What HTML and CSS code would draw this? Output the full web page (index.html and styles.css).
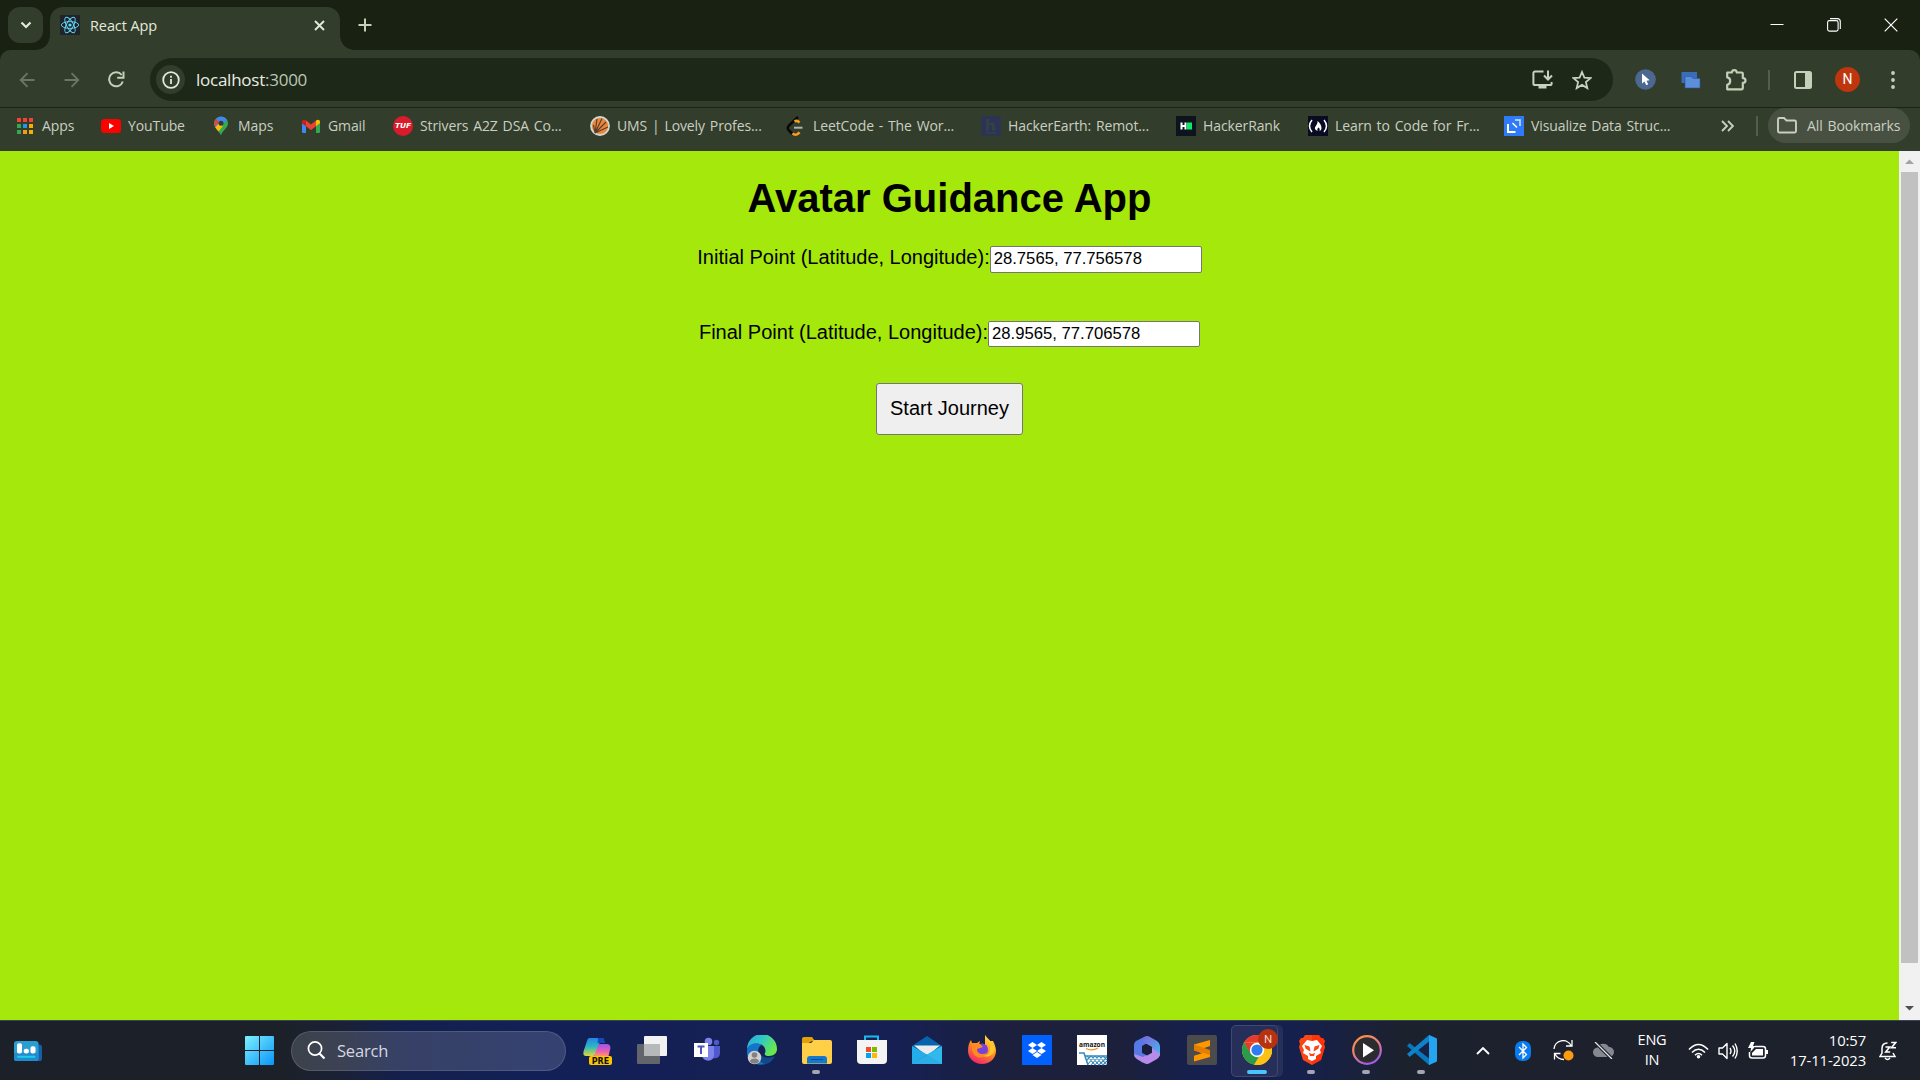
FILE: index.html
```html
<!DOCTYPE html>
<html lang="en">
<head>
<meta charset="utf-8">
<title>React App</title>
<link rel="stylesheet" href="styles.css">
</head>
<body>
<div class="desktop">
  <header class="tabstrip">
    <button class="tab-search" aria-label="Search tabs"><svg width="12" height="8" viewBox="0 0 12 8"><path d="M1.5 1.5 6 6l4.500-4.500" fill="none" stroke="#e3e9dc" stroke-width="2.200"/></svg></button>
    <div class="tab">
      <svg width="20" height="20" viewBox="0 0 20 20"><rect width="20" height="20" rx="1" fill="#20232a"/><g fill="none" stroke="#61dafb" stroke-width=".9"><ellipse cx="10" cy="10" rx="8.700" ry="3.400"/><ellipse cx="10" cy="10" rx="8.700" ry="3.400" transform="rotate(60 10 10)"/><ellipse cx="10" cy="10" rx="8.700" ry="3.400" transform="rotate(120 10 10)"/></g><circle cx="10" cy="10" r="1.600" fill="#61dafb"/></svg>
      <span class="tab-title">React App</span>
      <svg width="11" height="11" viewBox="0 0 11 11"><path d="M1 1l9 9M10 1l-9 9" stroke="#e3e9dc" stroke-width="1.900"/></svg>
    </div>
    <svg class="new-tab" width="14" height="14" viewBox="0 0 14 14"><path d="M7 .5v13M.5 7h13" stroke="#c5d0b8" stroke-width="2"/></svg>
    <div class="window-controls">
      <svg width="14" height="14" viewBox="0 0 14 14"><path d="M.5 6.500h13" stroke="#fff"/></svg>
      <svg width="14" height="14" viewBox="0 0 14 14"><rect x=".6" y="2.600" width="10.500" height="10.500" rx="1.800" fill="none" stroke="#fff" stroke-width="1.100"/><path d="M3 .6h7.300a3 3 0 0 1 3 3V11" fill="none" stroke="#fff" stroke-width="1.100"/></svg>
      <svg width="14" height="14" viewBox="0 0 14 14"><path d="M.7.7l12.600 12.600M13.300.7.7 13.300" stroke="#fff" stroke-width="1.200"/></svg>
    </div>
  </header>

  <nav class="toolbar">
    <span class="slot"><svg width="16" height="16" viewBox="0 0 16 16"><path d="M15.500 8H2M8.500 1.200 1.700 8l6.800 6.800" fill="none" stroke="#6d7566" stroke-width="1.800"/></svg></span>
    <span class="slot"><svg width="16" height="16" viewBox="0 0 16 16"><path d="M.5 8H14M7.500 1.200 14.300 8l-6.800 6.800" fill="none" stroke="#6d7566" stroke-width="1.800"/></svg></span>
    <span class="slot"><svg width="17" height="17" viewBox="0 0 17 17"><path d="M14.800 10.500A7 7 0 1 1 13.700 4" fill="none" stroke="#c5d0b8" stroke-width="2"/><path d="M15.500.5v6.300H9.200" fill="none" stroke="#c5d0b8" stroke-width="2"/></svg></span>
    <div class="omnibox">
      <span class="site-info"><svg width="18" height="18" viewBox="0 0 18 18"><circle cx="9" cy="9" r="7.800" fill="none" stroke="#e3e9dc" stroke-width="1.800"/><path d="M9 8v5M9 4.800v2" stroke="#e3e9dc" stroke-width="1.800"/></svg></span>
      <span class="url">localhost<i>:3000</i></span>
      <svg width="21" height="19" viewBox="0 0 21 19"><path d="M11.500 1.400H3a1.600 1.600 0 0 0-1.600 1.600v10.500A1.600 1.600 0 0 0 3 15.100h15a1.600 1.600 0 0 0 1.600-1.600V12" fill="none" stroke="#c9cfc3" stroke-width="2"/><path d="M6.500 15h8v3.500h-8z" fill="#c9cfc3"/><path d="M16 .5v8M12 5.500l4 4 4-4" fill="none" stroke="#c9cfc3" stroke-width="2"/></svg>
      <svg width="20" height="20" viewBox="0 0 20 20"><path d="m10 2 2.400 5.600 6.100.5-4.600 4 1.400 6L10 14.900l-5.300 3.200 1.400-6-4.600-4 6.100-.5z" fill="none" stroke="#c9cfc3" stroke-width="1.800"/></svg>
    </div>
    <span class="slot"><svg width="21" height="21" viewBox="0 0 21 21"><circle cx="10.500" cy="10.500" r="10.300" fill="#4d6890"/><path d="M7 4.500v10l2.500-2 1.700 3.700 2-1-1.700-3.500 3.200-.4z" fill="#fff"/></svg></span>
    <span class="slot"><svg width="20" height="18" viewBox="0 0 20 18"><path d="M.5 1h15.500v11H.5z" fill="#3b6cba"/><path d="M4 5.500h6l2 2h7V17H4z" fill="#5b8fdc" stroke="#2c559c" stroke-width=".6"/></svg></span>
    <span class="slot"><svg width="22" height="22" viewBox="0 0 22 22"><path d="M2.200 3.500h4.600c.2-1.600 1-2.400 2.500-2.400s2.300.8 2.500 2.400h4.800a1.200 1.200 0 0 1 1.200 1.200v4.400c1.800.1 2.700.9 2.700 2.400s-.9 2.300-2.700 2.400v5.200a1.200 1.200 0 0 1-1.200 1.200H2.200v-4.500c1.800-.3 3-1.600 3-3.700s-1.200-3.500-3-3.700z" fill="none" stroke="#c5d0b8" stroke-width="2.200" stroke-linejoin="round"/></svg></span>
    <span class="divider"></span>
    <span class="slot"><svg width="18" height="18" viewBox="0 0 18 18"><rect x="1" y="1" width="16" height="16" rx="1.500" fill="none" stroke="#c5d0b8" stroke-width="2"/><path d="M11 1h6v16h-6z" fill="#c5d0b8"/></svg></span>
    <span class="slot"><span class="profile">N</span></span>
    <span class="slot"><svg width="4" height="18" viewBox="0 0 4 18" fill="#c5d0b8"><circle cx="2" cy="2" r="1.900"/><circle cx="2" cy="9" r="1.900"/><circle cx="2" cy="16" r="1.900"/></svg></span>
  </nav>

  <nav class="bookmarks">
    <a class="bookmark apps"><svg width="18" height="18" viewBox="0 0 18 18"><path fill="#f44336" d="M1 1h4v4H1zM7 1h4v4H7zM13 1h4v4h-4z"/><path fill="#34a853" d="M1 7h4v4H1zM1 13h4v4H1z"/><path fill="#2196f3" d="M7 7h4v4H7z"/><path fill="#fbab05" d="M13 7h4v4h-4zM13 13h4v4h-4z"/><path fill="#f39c12" d="M7 13h4v4H7z"/></svg><span>Apps</span></a>
    <a class="bookmark"><svg width="20" height="20" viewBox="0 0 20 20"><rect y="3" width="20" height="14" rx="3.500" fill="#f00"/><path d="M8 7v6l5-3z" fill="#fff"/></svg><span>YouTube</span></a>
    <a class="bookmark"><svg width="20" height="20" viewBox="0 0 20 20"><path d="M10 .5a6.900 6.900 0 0 1 7 7C17 12 11.500 14 10 19.500 9 16 3 12 3 7.500a7 7 0 0 1 7-7z" fill="#34a853"/><path d="M3 7.500 5 3l3 3-3.500 6C3.500 10.500 3 9 3 7.500z" fill="#ea4335"/><path d="M5 3a7 7 0 0 1 11 1L8 11.500 4.500 12z" fill="#4285f4"/><path d="M4.300 11.500 8 7l4 3-4.500 5.500z" fill="#fbbc04"/><path d="m3.700 4.800 1.300-1.800L8 6l-2.500 3z" fill="#ea4335"/><circle cx="10" cy="7.300" r="2.500" fill="#333d2b"/></svg><span>Maps</span></a>
    <a class="bookmark"><svg width="20" height="20" viewBox="0 0 20 20"><path d="M1 7l4 3v7H2a1 1 0 0 1-1-1z" fill="#4285f4"/><path d="M19 7l-4 3v7h3a1 1 0 0 0 1-1z" fill="#34a853"/><path d="M5 4.500l5 4 5-4v5.800l-5 3.700-5-3.700z" fill="#ea4335"/><path d="M15 4.500c2-1.700 4-.7 4 1.300v1.500l-4 3z" fill="#fbbc04"/><path d="M1 7.300V5.800c0-2 2-3 4-1.300v5.800z" fill="#c5221f"/></svg><span>Gmail</span></a>
    <a class="bookmark"><svg width="20" height="20" viewBox="0 0 20 20"><circle cx="10" cy="10" r="10" fill="#d91c2c"/><text x="10" y="12.400" text-anchor="middle" textLength="16" lengthAdjust="spacingAndGlyphs" class="tuf">TUF</text></svg><span>Strivers A2Z DSA Co...</span></a>
    <a class="bookmark"><svg width="20" height="20" viewBox="0 0 20 20"><circle cx="10" cy="10" r="9" fill="#e9863b" stroke="#d5d5cf" stroke-width="1.800"/><path d="M5 17 3.500 9M5 17 7 3M5 17 12 2.500M5 17l11-11M5 17l13-6" stroke="#5b3e29" stroke-width="1.200"/></svg><span>UMS | Lovely Profes...</span></a>
    <a class="bookmark"><svg width="20" height="20" viewBox="0 0 20 20" fill="none" stroke-width="2.500"><path d="M12 1 3 9.500c-1.700 1.700-1.700 3.300 0 5L6.500 18" stroke="#090909"/><path d="M8.500 5.500c2-1.300 3.200-.9 5 1.100M6.500 17.300c2.500 2.300 5 1.600 7-1" stroke="#f89f1b"/><path d="M8 11.700h8.500" stroke="#b3b3b3" stroke-width="2"/></svg><span>LeetCode - The Wor...</span></a>
    <a class="bookmark"><svg width="20" height="20" viewBox="0 0 20 20"><rect width="20" height="20" rx="1.500" fill="#2c3454"/><path d="M5 3h3v4c4-1.500 6-.2 6 3v4.500h-3V11c0-2-1.300-2.200-3-1v4.500H5zM5 16h10v1.500H5z" fill="#344045"/></svg><span>HackerEarth: Remot...</span></a>
    <a class="bookmark"><svg width="20" height="20" viewBox="0 0 20 20"><path d="M0 0h20v20H0z" fill="#0e141e"/><path d="M4.500 6.500h2v2.500h2V6.500h2v7h-2V11h-2v2.500h-2z" fill="#fff"/><path d="M11 6.500h5v7h-5z" fill="#05ed62"/></svg><span>HackerRank</span></a>
    <a class="bookmark"><svg width="20" height="20" viewBox="0 0 20 20"><path d="M0 0h20v20H0z" fill="#0a0a23"/><path d="M4 4Q-1 10 4 16M16 4q5 6 0 12" fill="none" stroke="#fff" stroke-width="1.500"/><path d="M9.500 5c2.500 2 4 4.500 4 7 0 1.500-.7 2.500-2 3 .6-1.800.1-2.700-1-3.500-1.100.9-1.500 2-.9 3.400C7.500 14.300 6.500 13 7 11.500 7.700 9.500 9.800 8.500 9.500 5z" fill="#fff"/></svg><span>Learn to Code for Fr...</span></a>
    <a class="bookmark"><svg width="20" height="20" viewBox="0 0 20 20"><path d="M0 0h20v20H0z" fill="#2f7bf7"/><path d="M4 8v8h7.500" fill="none" stroke="#fff" stroke-width="2"/><path d="m8.500 7 4.500 4.500" stroke="#fff" stroke-width="1.500"/><path d="M11 4h5v6" fill="none" stroke="#d3e5ff" stroke-width="1.500"/></svg><span>Visualize Data Struc...</span></a>
    <svg class="overflow" width="13" height="12" viewBox="0 0 13 12"><path d="m1 1 5 5-5 5M7 1l5 5-5 5" fill="none" stroke="#c9cfc3" stroke-width="1.900"/></svg>
    <span class="bm-divider"></span>
    <a class="all-bookmarks"><svg width="20" height="17" viewBox="0 0 20 17"><path d="M1 2.500A1.500 1.500 0 0 1 2.500 1H7l2.500 2.500h8A1.500 1.500 0 0 1 19 5v9a1.500 1.500 0 0 1-1.500 1.500h-15A1.500 1.500 0 0 1 1 14z" fill="none" stroke="#c9cfc3" stroke-width="1.900"/></svg><span>All Bookmarks</span></a>
  </nav>

  <div class="viewport">
    <main class="page">
      <h1>Avatar Guidance App</h1>
      <label class="field">Initial Point (Latitude, Longitude):<input type="text" value="28.7565, 77.756578"></label>
      <label class="field">Final Point (Latitude, Longitude):<input type="text" value="28.9565, 77.706578"></label>
      <button class="start">Start Journey</button>
    </main>
    <aside class="scrollbar">
      <svg width="21" height="21" viewBox="0 0 21 21"><path d="M6 13h9l-4.500-4.500z" fill="#a3a3a3"/></svg>
      <div class="thumb"></div>
      <svg class="down" width="21" height="21" viewBox="0 0 21 21"><path d="M6 7h9l-4.500 4.500z" fill="#505050"/></svg>
    </aside>
  </div>

  <footer class="taskbar">
    <svg class="widgets" width="28" height="20" viewBox="0 0 28 23" preserveAspectRatio="none"><rect x="10" y="4" width="18" height="19" rx="3" fill="#155fa8"/><rect width="24.500" height="23" rx="3" fill="#2b9dd0"/><path d="M0 14h24.500v6a3 3 0 0 1-3 3H3a3 3 0 0 1-3-3z" fill="#2589cc"/><g fill="#fff"><rect x="3" y="2.500" width="5" height="12" rx="2"/><rect x="9.800" y="9" width="5" height="5.500" rx="2"/><rect x="16.500" y="6" width="5" height="8.500" rx="2"/></g><rect x="3" y="17" width="18.500" height="2.200" rx="1" fill="#13d2ef"/></svg>
    <svg class="start-logo" width="29" height="29" viewBox="0 0 29 29"><defs><linearGradient id="win" gradientUnits="userSpaceOnUse" x1="0" y1="0" x2="29" y2="29"><stop stop-color="#7cf1ff"/><stop offset="1" stop-color="#0a95f8"/></linearGradient></defs><path d="M0 1a1 1 0 0 1 1-1h13v14H0zM15 0h13a1 1 0 0 1 1 1v13H15zM0 15h14v14H1a1 1 0 0 1-1-1zM15 15h14v13a1 1 0 0 1-1 1H15z" fill="url(#win)"/></svg>
    <div class="search"><svg width="19" height="19" viewBox="0 0 19 19"><circle cx="8" cy="7.500" r="6.600" fill="none" stroke="#fff" stroke-width="1.700"/><path d="m12.500 12.500 5 5" stroke="#fff" stroke-width="2.200"/></svg><span>Search</span></div>
    <div class="pinned">
      <span class="app"><svg width="30" height="30" viewBox="0 0 30 30"><defs><linearGradient id="c1" x2="0" y2="1"><stop stop-color="#2384ea"/><stop offset=".5" stop-color="#2fb9bd"/><stop offset="1" stop-color="#e0d83d"/></linearGradient><linearGradient id="c2" x2="0" y2="1"><stop stop-color="#9a57ed"/><stop offset=".6" stop-color="#e95db5"/><stop offset="1" stop-color="#ff975b"/></linearGradient></defs><path d="M8 3h12c2 0 2 2 2.600 5h-5l-4 11c-1 2-2 2-4 2H4c-3 0-3-3-2-6l3-9c.6-2 1-3 3-3z" fill="url(#c1)"/><path d="M16 3h4c2 0 2 2 2.600 5h-7z" fill="#1549bc"/><path d="M19 9h6c3 0 4 3 3 6l-1.500 6H12l4-10c.6-1.500 1-2 3-2z" fill="url(#c2)"/><rect x="7" y="21" width="23" height="9" rx="2" fill="#ffc400"/><text x="18.500" y="28.500" text-anchor="middle" class="pre">PRE</text></svg></span>
      <span class="app"><svg width="30" height="30" viewBox="0 0 30 30"><rect y="9" width="23" height="20" rx="1" fill="#62656a"/><rect x="7" y="1" width="23" height="20" rx="1" fill="#f2f2f2"/><path d="M7 9h16v12H7z" fill="#b7b8ba"/></svg></span>
      <span class="app"><svg width="30" height="30" viewBox="0 0 30 30"><circle cx="16.500" cy="6.500" r="3.800" fill="#7b83eb"/><circle cx="24.500" cy="7.500" r="2.700" fill="#5059c9"/><path d="M18 11h10v7c0 7-10 7-10 0z" fill="#5059c9"/><path d="M10 11h12v9c0 8-12 7-12 0z" fill="#7b83eb"/><rect x="2" y="8" width="14" height="14" fill="#fff"/><path d="M5.500 11.500h7M9 11.500V19" stroke="#4b53bc" stroke-width="2"/></svg></span>
      <span class="app"><svg width="30" height="30" viewBox="0 0 30 30"><defs><linearGradient id="e1" x2="1" y2=".5"><stop stop-color="#2aa9e6"/><stop offset=".5" stop-color="#31c7c5"/><stop offset="1" stop-color="#69e84b"/></linearGradient></defs><path d="M0 14A15 15 0 0 1 30 14c0 4-3 7-8 7-3 0-5-1-4-3 2-5-3-10-9-9-5 .5-8 3-9 5z" fill="url(#e1)"/><path d="M0 15c1-6 9-9 15-5-4 1-5 7-2 10 4 4 9 4 14 2-4 7-12 9-18 7S-1 21 0 15z" fill="#1474c9"/><path d="M13 18c2 5 9 6 15 3-2 4-5 7-9 8-5 0-8-5-6-11z" fill="#114a8b"/><circle cx="7.500" cy="22.500" r="6.800" fill="#d1d0ce"/><circle cx="7.500" cy="20" r="2.800" fill="#838280"/><path d="M3 26.500c0-4 9-4 9 0-2 3-7 3-9 0z" fill="#838280"/></svg></span>
      <span class="app running"><svg width="30" height="30" viewBox="0 0 30 30"><path d="M0 4a2 2 0 0 1 2-2h8l3 4h-3L0 12z" fill="#e3a008"/><path d="M0 8h9l3-3h16a2 2 0 0 1 2 2v20a2 2 0 0 1-2 2H2a2 2 0 0 1-2-2z" fill="#ffcf48"/><path d="M5 28.500V24a3 3 0 0 1 3-3h14a3 3 0 0 1 3 3v4.500z" fill="#1478ce"/><path d="M9 24.500h12" stroke="#0a4f91"/></svg></span>
      <span class="app"><svg width="30" height="30" viewBox="0 0 30 30"><path d="M8 7V1.500h13V7" fill="none" stroke="#1bb9ef" stroke-width="2"/><path d="M0 5h30v20a4 4 0 0 1-4 4H4a4 4 0 0 1-4-4z" fill="#f4f4f5"/><path d="M9 12h5v5H9z" fill="#f25022"/><path d="M15 12h5v5h-5z" fill="#7fba00"/><path d="M9 18h5v5H9z" fill="#00a4ef"/><path d="M15 18h5v5h-5z" fill="#ffb900"/></svg></span>
      <span class="app"><svg width="30" height="30" viewBox="0 0 30 30"><path d="M0 11 15 1l15 10-3 5H3z" fill="#0764ac"/><path d="M2 10.500h26L15 21z" fill="#ececec"/><path d="M0 11l15 8.500L30 11v18H0z" fill="#23aee9"/><path d="M15 19.500 30 29H0z" fill="#1b91da"/><path d="m0 29 30-18v18z" fill="#38c0ef" opacity=".6"/></svg></span>
      <span class="app"><svg width="30" height="30" viewBox="0 0 30 30"><defs><linearGradient id="f1" x1=".8" y1="0" x2=".3" y2="1"><stop stop-color="#ffee39"/><stop offset=".5" stop-color="#ff8b20"/><stop offset="1" stop-color="#f0236b"/></linearGradient></defs><path d="M18 0c2 3 4 4 5 6l3 0c2 4 3 7 3 10 0 7-6 13-14 13S1 23 1 16c0-5 1-8 3-11l1 3h5l3-2-1 4 6 1z" fill="url(#f1)"/><circle cx="15" cy="14.500" r="6" fill="#7641dc"/><path d="m5 8 8 1 3 3-6 2c0 5 5 6 10 4-3 7-14 6-15-4z" fill="#ff8b20"/><path d="M18 0c1 4 6 7 5 14 0 5-4 7-7 7 6 2 11-1 12-8-1-5-7-8-10-13z" fill="#ffc52d"/></svg></span>
      <span class="app"><svg width="30" height="30" viewBox="0 0 30 30"><path d="M0 0h30v30H0z" fill="#0061fe"/><path d="m10.500 7 4.500 3-4.500 3L6 10zM19.500 7l4.500 3-4.500 3-4.500-3zM10.500 13l4.500 3-4.500 3L6 16zM19.500 13l4.500 3-4.500 3-4.500-3zM15 17l4.500 3-4.500 3-4.500-3z" fill="#fff"/></svg></span>
      <span class="app"><svg class="spill" width="30" height="30" viewBox="0 0 30 30"><path d="M0 0h30v30H0z" fill="#fff"/><text x="15" y="11.500" text-anchor="middle" textLength="26" lengthAdjust="spacingAndGlyphs" class="amazon">amazon</text><path d="M9 13.500q6 3 12-.5" fill="none" stroke="#f5911e" stroke-width="1.200"/><path d="M2 18h5l4 12M8 21h22" fill="none" stroke="#398bb9" stroke-width="1.600"/><path d="m10 21 8 9m-4-9 8 9m-4-9 8 9m-4-9 8 9m-4-9 4 4M14 21l-4 4m8-4-7 8m11-8-8 9m12-9-8 9m12-8-8 8m8-4-4 4" stroke="#398bb9" stroke-width="1.100"/></svg></span>
      <span class="app"><svg width="30" height="30" viewBox="0 0 30 30"><defs><linearGradient id="m1" x2="1" y2="1"><stop stop-color="#7d64da"/><stop offset="1" stop-color="#46b9ee"/></linearGradient></defs><path d="M12 2 5 5.500Q2 7 2 10v9q0 3 3 5l6 4 4-8-5-3v-6l5-3z" fill="#5779e6"/><path d="M12 2q3-2 6 0l7 4q3 2 3 5v10l-8-3v-6l-9-5z" fill="url(#m1)"/><path d="m2 19 9 3 9-5v-4l8 6q0 3-3 5l-7 4q-3 2-6 0l-7-4q-3-2-3-5z" fill="#b78bea"/><path d="m15 9.500 5 2.800v5.400l-5 2.800-5-2.800v-5.400z" fill="#1b1e3a"/></svg></span>
      <span class="app"><svg width="30" height="30" viewBox="0 0 30 30"><rect width="30" height="30" rx="2" fill="#4b4b4b"/><path d="M23 5v6l-8.500 3 8.500 2.700V22L7 26.500v-5.700l8-2.500-8-3v-5.800z" fill="#ff9800"/><path d="m7 9.500 16 5.500v5L7 15.300z" fill="#e47d00"/></svg></span>
      <span class="app active"><svg width="30" height="30" viewBox="0 0 30 30"><circle cx="15" cy="15" r="15" fill="#fbc116"/><path d="M2 7.500A15 15 0 0 1 28 7.500H15z" fill="#e33b2e"/><path d="m12 29.800 8.500-10.300L15 7.500h13a15 15 0 0 1-16 22.300z" fill="#fbc116"/><path d="M2 7.500 8.500 19 15 8z" fill="#e33b2e"/><path d="M2 7.500A15 15 0 0 0 12 29.700l5-8.200-9-4z" fill="#2a9b49"/><circle cx="15" cy="15" r="7.200" fill="#fff"/><circle cx="15" cy="15" r="5.600" fill="#2d7cf0"/></svg><b class="badge">N</b></span>
      <span class="app running"><svg width="30" height="30" viewBox="0 0 30 30"><path d="M8 0h14l2 3h2l2 3-1 3 1 3-4 13-9 5-9-5L2 12l1-3-1-3 2-3h2z" fill="#fb4715"/><path d="M15 0h7l2 3h2l2 3-1 3 1 3-4 13-9 5z" fill="#ff2000" opacity=".5"/><path d="m10 5 5 1 5-1 5 6-2 4 1 3-5 3v3l-4 2-4-2v-3l-5-3 1-3-2-4z" fill="#fff"/><path d="m7.500 10 5 1.500 1 5-2-1-3-2zM22.500 10l-5 1.500-1 5 2-1 3-2zM12 18l3 1 3-1-1 3h-4z" fill="#fb4715"/></svg></span>
      <span class="app running"><svg width="30" height="30" viewBox="0 0 30 30"><defs><linearGradient id="p" x2=".5" y2="1"><stop stop-color="#ff963a"/><stop offset=".5" stop-color="#ed8277"/><stop offset="1" stop-color="#a25ce2"/></linearGradient></defs><circle cx="15" cy="15" r="13.800" fill="#2c2c2e" stroke="url(#p)" stroke-width="2.200"/><path d="M11 8v14.500l11-7.200z" fill="#fff"/></svg></span>
      <span class="app running"><svg width="30" height="30" viewBox="0 0 30 30"><path d="m0 11 2.500-3L24 25v4l-2 1z" fill="#0877bd"/><path d="m0 19 2.500 3L24 5V1l-2-1z" fill="#0e83cb"/><path d="M22 0l7 3a2 2 0 0 1 1 2v20a2 2 0 0 1-1 2l-7 3z" fill="#25a5ef"/><path d="m12 15 10-7.500v15z" fill="#1a2148"/></svg></span>
    </div>
    <div class="tray">
      <svg width="14" height="9" viewBox="0 0 14 9"><path d="m1 8 6-6 6 6" fill="none" stroke="#fff" stroke-width="1.900"/></svg>
      <svg width="16" height="20" viewBox="0 0 16 20"><rect width="16" height="20" rx="7" fill="#087bef"/><path d="m4 6 7.500 7.500L8 17V3l3.500 3.500L4 14" fill="none" stroke="#fff" stroke-width="1.300"/></svg>
      <svg width="21" height="21" viewBox="0 0 21 21"><path d="M1 9A9 9 0 0 1 18 5.500M19 0v6h-6M1.500 19.500v-6h6M2 14c1.500 3 4 5.300 9 5.500" fill="none" stroke="#fff" stroke-width="1.300"/><circle cx="15.500" cy="15.500" r="5" fill="#ff9b0b"/></svg>
      <svg width="21" height="17" viewBox="0 0 21 17"><path d="M5 15a4.700 4.700 0 0 1-.5-9.500A6.400 6.400 0 0 1 16 5a5 5 0 0 1 0 10z" fill="#858890"/><path d="m2 0 17 17" stroke="#1c212b" stroke-width="3.500"/><path d="m2 0 17 17" stroke="#e4e4e4" stroke-width="1.300"/></svg>
      <div class="lang"><span>ENG</span><span>IN</span></div>
      <svg width="21" height="16" viewBox="0 0 21 16"><g fill="none" stroke="#fff" stroke-width="1.600"><path d="M1 6.500q9.500-10 19 0M4 9.500q6.500-6.500 13 0M7 12.200q3.500-3.500 7 0"/></g><circle cx="10.500" cy="13.700" r="1.800" fill="#fff"/></svg>
      <svg width="20" height="18" viewBox="0 0 20 18"><path d="M1 6h3.500L9 1.500v15L4.500 12H1zM12 6q2 3 0 6M14.500 3.500q4.500 5.500 0 11M17 1.500q4.500 7.500 0 15" fill="none" stroke="#fff" stroke-width="1.400" stroke-linejoin="round"/></svg>
      <svg width="21" height="18" viewBox="0 0 21 18"><path d="M7 4.500h8a2.500 2.500 0 0 1 2.500 2.500v6.500A2.500 2.500 0 0 1 15 16H4a2.500 2.500 0 0 1-2.500-2.500V10" fill="none" stroke="#fff" stroke-width="1.500"/><path d="M8 7h7v6.500H4V11zM18 8h2v4h-2zM3 0h3.500L5 4h2.500L2.500 10 3 6H0z" fill="#fff"/></svg>
      <div class="clock"><span>10:57</span><span>17-11-2023</span></div>
      <svg width="18" height="20" viewBox="0 0 18 20"><path d="M8.500 2C5 2 3 4 3 7.500V12l-2 3.500h15L14 12M6 17q2.500 3 5 0" fill="none" stroke="#fff" stroke-width="1.500"/><path d="M6.500 6h4.200l-4 5h4.500M12.200 1.500h4.500l-4.200 5.300H17" fill="none" stroke="#fff" stroke-width="1.600"/></svg>
    </div>
  </footer>
</div>
</body>
</html>
```
FILE: styles.css
```css
* { box-sizing: border-box; }
body { margin: 0; overflow: hidden; font-family: "Open Sans", "Noto Sans", sans-serif; }
svg { display: block; flex: none; }
.desktop { width: 1920px; height: 1080px; display: flex; flex-direction: column; background: #182112; }

/* tab strip */
.tabstrip { height: 50px; flex: none; display: flex; align-items: center; padding: 0 22px 0 8px; background: #182112; }
.tab-search { width: 35px; height: 36px; padding: 0; border: 0; border-radius: 12px; background: #333d2b; display: flex; align-items: center; justify-content: center; }
.tab { position: relative; width: 290px; height: 43px; align-self: flex-end; margin-left: 7px; padding: 0 15px 7px 10px; display: flex; align-items: center; background: #333d2b; border-radius: 13px 13px 0 0; }
.tab::before, .tab::after { content: ""; position: absolute; bottom: 0; width: 14px; height: 14px; }
.tab::before { left: -14px; background: radial-gradient(circle at 0 0, transparent 13.5px, #333d2b 14px); }
.tab::after { right: -14px; background: radial-gradient(circle at 100% 0, transparent 13.5px, #333d2b 14px); }
.tab-title { flex: 1; margin-left: 10px; font-size: 14.5px; letter-spacing: -.1px; color: #e3e9dc; }
.new-tab { margin-left: 18px; }
.window-controls { margin-left: auto; display: flex; gap: 43px; }

/* toolbar */
.toolbar { height: 58px; flex: none; display: flex; align-items: center; padding: 2px 0 0 4px; background: #333d2b; border-bottom: 1px solid #1b2415; border-radius: 10px 10px 0 0; }
.slot { width: 45px; flex: none; display: flex; align-items: center; justify-content: center; }
.omnibox { width: 1463px; height: 43px; margin: 0 10px 0 11px; padding: 0 21px 0 6px; display: flex; align-items: center; gap: 19px; border-radius: 22px; background: #1e2818; }
.site-info { width: 29px; height: 29px; border-radius: 50%; background: #333d2b; display: flex; align-items: center; justify-content: center; }
.url { flex: 1; margin-left: -8px; font-size: 17px; letter-spacing: -.25px; color: #e8ede2; }
.url i { font-style: normal; color: #bdc6b4; }
.divider { width: 2px; height: 20px; margin: 0 10px; background: #535f49; }
.profile { width: 25px; height: 25px; border-radius: 50%; background: #bf360c; color: #fff; font: 14px/25px Roboto, sans-serif; text-align: center; }

/* bookmarks */
.bookmarks { height: 43px; flex: none; display: grid; grid-template-columns: 85px 110px 90px 92px 197px 196px 195px 195px 132px 196px 217px 35px 12px 142px; align-items: start; padding-left: 16px; background: #333d2b; }
.bookmark, .all-bookmarks { height: 35px; display: flex; align-items: center; gap: 7px; font-size: 14px; letter-spacing: -.1px; word-spacing: 1.3px; white-space: nowrap; color: #c9cfc3; }
.apps { gap: 8px; }
.overflow { margin-top: 12px; }
.bm-divider { width: 2px; height: 20px; margin-top: 8px; background: #535f49; }
.all-bookmarks { gap: 10px; padding-left: 9px; border-radius: 18px; background: #485141; }
.tuf { font: italic bold 7px "DejaVu Sans", sans-serif; fill: #fff; }

/* page */
.viewport { flex: 1; display: flex; min-height: 0; }
.page { width: 1899px; display: flex; flex-direction: column; align-items: center; background: #a5e80b; color: #000; font-family: "Liberation Sans", Arial, sans-serif; font-size: 20px; }
h1 { margin: 24px 0 25px; font-size: 40px; line-height: 46px; }
.field { display: flex; height: 27px; line-height: 23px; margin-bottom: 48px; }
.field input { width: 212px; height: 27px; margin: 0; padding: 1px 3px 2px; border: 1px solid #767676; border-radius: 2px; background: #fff; color: #000; font: 16.67px "Liberation Sans", Arial, sans-serif; }
.field + .field { height: 26px; margin-bottom: 36px; }
.field + .field input { height: 26px; }
.start { width: 147px; height: 52px; padding: 0 0 2px; border: 1px solid #767676; border-radius: 3px; background: #efefef; color: #000; font: 20px "Liberation Sans", Arial, sans-serif; }
.scrollbar { width: 21px; display: flex; flex-direction: column; align-items: center; background: #f1f1f1; }
.thumb { width: 17px; height: 791px; background: #c1c1c1; }
.down { margin-top: auto; }

/* taskbar */
.taskbar { height: 60px; flex: none; display: flex; align-items: center; border-top: 1px solid #3c4154; background: linear-gradient(90deg, #1c2129 0, #1c2129 280px, #1a2136 340px, #14204c 400px, #122057 540px, #152054 720px, #162052 900px, #1c203c 1020px, #1c203b 1120px, #15204f 1200px, #16204c 1300px, #1c212e 1400px, #1c212a 1920px); }
.widgets { margin-left: 14px; }
.start-logo { margin-left: 203px; }
.search { width: 275px; height: 40px; margin-left: 17px; padding-left: 15px; display: flex; align-items: center; gap: 11px; border: 1px solid #ffffff22; border-radius: 20px; background: #ffffff26; color: #d5d8e1; font-size: 16.5px; letter-spacing: -.2px; }
.pinned { display: flex; margin-left: 3px; }
.app { position: relative; width: 55px; height: 59px; padding-bottom: 1px; display: flex; align-items: center; justify-content: center; }
.running::after, .active::after { content: ""; position: absolute; bottom: 6px; left: 23px; width: 8px; height: 4px; border-radius: 2px; background: #a3a6b2; }
.active::before { content: ""; position: absolute; left: 2px; top: 4px; width: 45px; height: 50px; border: 1px solid #ffffff20; border-radius: 5px; background: #ffffff12; box-shadow: 5px 0 0 #ffffff12; }
.active svg { position: relative; }
.active::after { left: 18px; width: 20px; background: #4cc2ff; }
.badge { position: absolute; left: 29px; top: 8px; width: 20px; height: 20px; border-radius: 50%; background: #b7330f; color: #f5d6cb; font: 11.5px/20px Roboto, sans-serif; text-align: center; }
.spill { overflow: visible; }
.pre { font: bold 8px "DejaVu Sans", sans-serif; fill: #111; }
.amazon { font: bold 7.5px "Open Sans", sans-serif; fill: #111; }
.tray { display: grid; grid-template-columns: 39px 38px 40px 36px 59px 30px 30px 30px 101px 18px; align-items: center; margin-left: 27px; color: #fff; font-size: 14.5px; line-height: 20px; letter-spacing: -.2px; }
.lang, .clock { display: flex; flex-direction: column; margin-top: -2px; }
.lang { align-items: center; margin-right: 13px; }
.clock { align-items: flex-end; width: 88px; font-size: 14.8px; letter-spacing: -.1px; }
```
